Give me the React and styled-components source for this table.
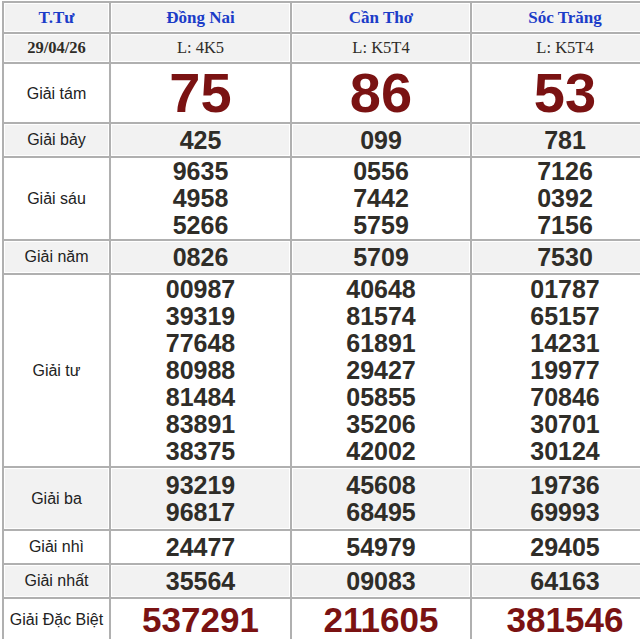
import styled, { createGlobalStyle } from 'styled-components';

const GlobalStyle = createGlobalStyle`
  html, body {
    margin: 0;
    padding: 0;
    background: #fff;
    overflow: hidden;
  }
`;

const Page = styled.div`
  width: 640px;
  height: 639px;
  overflow: hidden;
  padding: 1px 0 0 2px;
  box-sizing: border-box;
`;

const Table = styled.table`
  border-collapse: collapse;
  width: 656px;
  table-layout: fixed;
  font-family: "Liberation Sans", Arial, sans-serif;
  color: #2f2d28;
`;

const Row = styled.tr`
  height: ${p => p.h}px;
  background: ${p => (p.shade ? '#f2f2f2' : '#fff')};
`;

const Cell = styled.td`
  border: 2px solid #b0b0b0;
  padding: 0;
  text-align: center;
  vertical-align: middle;
  box-shadow: inset 0 0 0 1px #fff;
`;

const HeadCell = styled(Cell)`
  font-family: "Liberation Serif", "Times New Roman", serif;
  font-weight: bold;
  font-size: 17px;
  color: #1b3cc8;
`;

const DateCell = styled(Cell)`
  font-family: "Liberation Serif", "Times New Roman", serif;
  font-weight: ${p => (p.bold ? 'bold' : 'normal')};
  font-size: 16.5px;
  color: #2f2d28;
`;

const Label = styled(Cell)`
  font-size: 16px;
  color: #222;
  padding-top: ${p => (p.nudge ? 2 : 0)}px;
`;

const Numbers = styled(Cell)`
  font-weight: bold;
  font-size: ${p => p.size || 25}px;
  line-height: ${p => p.lh || 27}px;
  color: ${p => (p.red ? '#7a1212' : '#2f2d28')};
`;

const Line = styled.div``;

const provinces = [
  { name: 'Đồng Nai', code: 'L: 4K5' },
  { name: 'Cần Thơ', code: 'L: K5T4' },
  { name: 'Sóc Trăng', code: 'L: K5T4' },
];

const prizes = [
  { label: 'Giải tám', h: 60, shade: false, big: true, values: [['75'], ['86'], ['53']] },
  { label: 'Giải bảy', h: 34, shade: true, values: [['425'], ['099'], ['781']] },
  {
    label: 'Giải sáu', h: 83, shade: false,
    values: [['9635', '4958', '5266'], ['0556', '7442', '5759'], ['7126', '0392', '7156']],
  },
  { label: 'Giải năm', h: 34, shade: true, values: [['0826'], ['5709'], ['7530']] },
  {
    label: 'Giải tư', h: 193, shade: false,
    values: [
      ['00987', '39319', '77648', '80988', '81484', '83891', '38375'],
      ['40648', '81574', '61891', '29427', '05855', '35206', '42002'],
      ['01787', '65157', '14231', '19977', '70846', '30701', '30124'],
    ],
  },
  {
    label: 'Giải ba', h: 63, shade: true,
    values: [['93219', '96817'], ['45608', '68495'], ['19736', '69993']],
  },
  { label: 'Giải nhì', h: 34, shade: false, values: [['24477'], ['54979'], ['29405']] },
  { label: 'Giải nhất', h: 34, shade: true, values: [['35564'], ['09083'], ['64163']] },
  { label: 'Giải Đặc Biệt', h: 44, shade: false, special: true, values: [['537291'], ['211605'], ['381546']] },
];

export default function App() {
  return (
    <Page>
      <GlobalStyle />
      <Table>
        <colgroup>
          <col style={{ width: 107 }} />
          <col style={{ width: 181 }} />
          <col style={{ width: 180 }} />
          <col style={{ width: 188 }} />
        </colgroup>
        <tbody>
          <Row h={31} shade>
            <HeadCell>T.Tư</HeadCell>
            {provinces.map(p => (
              <HeadCell key={p.name}>{p.name}</HeadCell>
            ))}
          </Row>
          <Row h={30} shade>
            <DateCell bold>29/04/26</DateCell>
            {provinces.map(p => (
              <DateCell key={p.name}>{p.code}</DateCell>
            ))}
          </Row>
          {prizes.map(prize => (
            <Row key={prize.label} h={prize.h} shade={prize.shade}>
              <Label nudge={prize.big}>{prize.label}</Label>
              {prize.values.map((list, i) => (
                <Numbers
                  key={i}
                  red={prize.big || prize.special}
                  size={prize.big ? 56 : prize.special ? 35 : 25}
                  lh={prize.big ? 58 : prize.special ? 40 : 27}
                >
                  {list.map(v => (
                    <Line key={v}>{v}</Line>
                  ))}
                </Numbers>
              ))}
            </Row>
          ))}
        </tbody>
      </Table>
    </Page>
  );
}
